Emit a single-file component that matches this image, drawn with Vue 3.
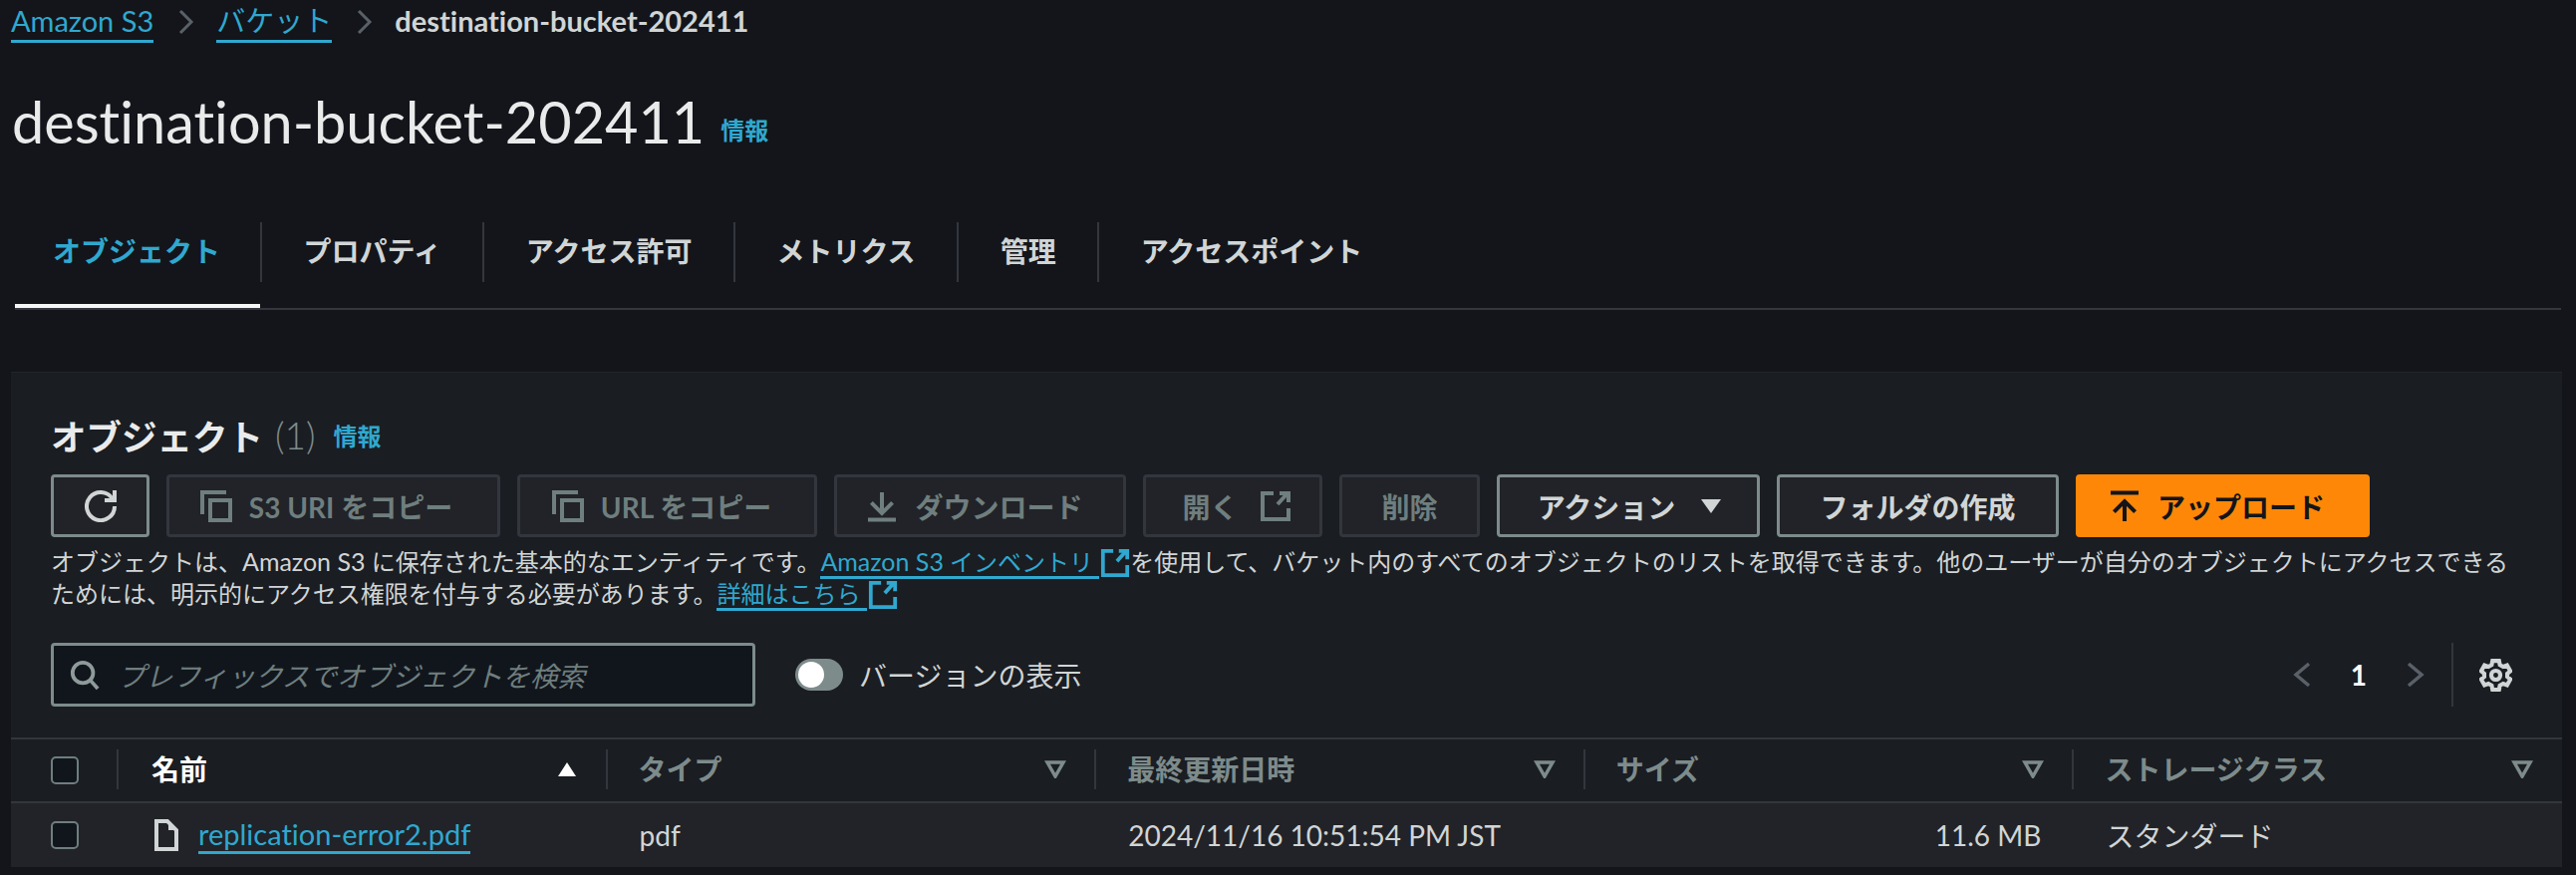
<template>
  <div class="page">
    <nav class="crumbs">
      <a class="link">Amazon S3</a>
      <svg class="crumb-sep" viewBox="0 0 16 26"><path d="M2 2l11 11L2 24" /></svg>
      <a class="link">バケット</a>
      <svg class="crumb-sep" viewBox="0 0 16 26"><path d="M2 2l11 11L2 24" /></svg>
      <span class="crumb-current">destination-bucket-202411</span>
    </nav>

    <div class="title-row">
      <h1>destination-bucket-202411</h1>
      <span class="info info-lg">情報</span>
    </div>

    <div class="tabs">
      <div v-for="(tab, i) in tabs" :key="tab" class="tab" :class="{ active: i === 0 }">{{ tab }}</div>
    </div>

    <section class="panel">
      <div class="panel-head">
        <h2>オブジェクト</h2>
        <span class="count">(1)</span>
        <span class="info">情報</span>
      </div>

      <div class="actions">
        <button class="btn b-refresh">
          <svg class="icon" viewBox="0 0 16 16"><path d="M10 5h5V0" /><path d="M15 8a7 7 0 1 1-1.05-3.66" /></svg>
        </button>
        <button class="btn off b-s3">
          <svg class="icon" viewBox="0 0 16 16"><path d="M1 12V1h12" /><rect x="5" y="5" width="10" height="10" /></svg>
          S3 URI をコピー
        </button>
        <button class="btn off b-url">
          <svg class="icon" viewBox="0 0 16 16"><path d="M1 12V1h12" /><rect x="5" y="5" width="10" height="10" /></svg>
          URL をコピー
        </button>
        <button class="btn off b-dl">
          <svg class="icon" viewBox="0 0 16 16"><path d="M8 1v10.5M2.7 6.2L8 11.5l5.3-5.3M1 14.75h14" /></svg>
          ダウンロード
        </button>
        <button class="btn off b-open">
          開く
          <svg class="icon" viewBox="0 0 16 16"><path d="M7 1.5H1.5v13h13V9" /><path d="M9 7l5-5.5M10 1.5h4.5V6" /></svg>
        </button>
        <button class="btn off b-del">削除</button>
        <button class="btn b-action">
          アクション
          <svg class="caret" viewBox="0 0 24 16"><path d="M2 1h20L12 15z" /></svg>
        </button>
        <button class="btn b-folder">フォルダの作成</button>
        <button class="btn primary b-upload">
          <svg class="icon" viewBox="0 0 16 16"><path d="M1 1.25h14M8 15.5V5M2.7 10.8L8 5.5l5.3 5.3" /></svg>
          アップロード
        </button>
      </div>

      <p class="desc">
        オブジェクトは、<span class="latin">Amazon S3</span> に保存された基本的なエンティティです。<a class="link"><span class="latin">Amazon S3</span> インベントリ </a><svg class="ext" viewBox="0 0 16 16"><path d="M7 1.5H1.5v13h13V9" /><path d="M9 7l5-5.5M10 1.5h4.5V6" /></svg>を使用して、バケット内のすべてのオブジェクトのリストを取得できます。他のユーザーが自分のオブジェクトにアクセスできる<br />ためには、明示的にアクセス権限を付与する必要があります。<a class="link">詳細はこちら </a><svg class="ext" viewBox="0 0 16 16"><path d="M7 1.5H1.5v13h13V9" /><path d="M9 7l5-5.5M10 1.5h4.5V6" /></svg>
      </p>

      <div class="filters">
        <div class="search">
          <svg class="search-icon" viewBox="0 0 16 16"><circle cx="7" cy="7" r="5.5" /><path d="M11 11l4 4.5" /></svg>
          <span>プレフィックスでオブジェクトを検索</span>
        </div>
        <div class="toggle"><span class="knob"></span></div>
        <span class="toggle-label">バージョンの表示</span>
        <div class="pager">
          <svg class="page-arrow" viewBox="0 0 18 26"><path d="M16 2L3 13l13 11" /></svg>
          <span class="page-num">1</span>
          <svg class="page-arrow" viewBox="0 0 18 26"><path d="M2 2l13 11L2 24" /></svg>
        </div>
        <div class="gear-box">
          <svg class="gear" viewBox="0 0 16 16">
            <path d="M6.4 1h3.2l.4 2 1.6.9 1.9-.7 1.6 2.8-1.5 1.3v1.4l1.5 1.3-1.6 2.8-1.9-.7-1.6.9-.4 2H6.4l-.4-2-1.6-.9-1.9.7-1.6-2.8 1.5-1.3V7.3L.9 6l1.6-2.8 1.9.7L6 3z" />
            <circle cx="8" cy="8" r="2.2" />
          </svg>
        </div>
      </div>

      <div class="table">
        <div class="thead">
          <div class="check-cell"><span class="check"></span></div>
          <div v-for="(col, i) in columns" :key="col" class="th" :class="{ sorted: i === 0 }">
            <span>{{ col }}</span>
            <svg v-if="i === 0" class="sort" viewBox="0 0 22 16"><path d="M11 1l9 14H2z" /></svg>
            <svg v-else class="filter" viewBox="0 0 22 18"><path d="M3 2h16l-8 14z" /></svg>
          </div>
        </div>
        <div class="tbody">
          <div class="check-cell"><span class="check"></span></div>
          <div class="td td-name">
            <svg class="file" viewBox="0 0 24 32"><path d="M2 2h11l9 9v19H2z" /><path class="file-ear" d="M14 3v8h8z" /></svg>
            <a class="link">replication-error2.pdf</a>
          </div>
          <div class="td">pdf</div>
          <div class="td">2024/11/16 10:51:54 PM JST</div>
          <div class="td td-size">11.6 MB</div>
          <div class="td">スタンダード</div>
        </div>
      </div>
    </section>
  </div>
</template>

<script setup>
const tabs = ['オブジェクト', 'プロパティ', 'アクセス許可', 'メトリクス', '管理', 'アクセスポイント']
const columns = ['名前', 'タイプ', '最終更新日時', 'サイズ', 'ストレージクラス']
</script>

<style>
html,
body {
  margin: 0;
  background: #13151b;
}
</style>

<style scoped>
.page {
  width: 2585px;
  height: 878px;
  overflow: hidden;
  background: #13151b;
  color: #d1d5d5;
  font-family: Lato, "Noto Sans CJK JP", sans-serif;
  font-size: 28px;
  font-variant-ligatures: none;
}

.link {
  color: #30a8cf;
  border-bottom: 3px solid #30a8cf;
}

.latin {
  font-size: 25px;
}

/* パンくず */
.crumbs {
  display: flex;
  align-items: flex-start;
  height: 44px;
  padding-left: 11px;
  font-size: 29px;
  line-height: 38px;
  box-sizing: border-box;
  padding-top: 2px;
}

.crumb-sep {
  width: 16px;
  height: 26px;
  margin: 7px 22px 0 25px;
  fill: none;
  stroke: #5a6068;
  stroke-width: 3;
}

.crumb-current {
  font-weight: 700;
}

.title-row {
  display: flex;
  align-items: center;
  height: 154px;
  padding-left: 12px;
}

h1 {
  margin: 0;
  font-size: 57.6px;
  font-weight: 400;
  color: #e9ebeb;
}

.info {
  color: #30a8cf;
  font-size: 24px;
  font-weight: 700;
  margin-left: 18px;
}

.info-lg {
  margin-top: 16px;
  margin-left: 16px;
}

.tabs {
  display: flex;
  height: 113px;
  margin: 0 15px 62px 15px;
  padding-top: 25px;
  box-sizing: border-box;
  border-bottom: 2px solid #33363d;
}

.tab {
  position: relative;
  height: 60px;
  padding: 0 41.5px;
  line-height: 58px;
  font-weight: 700;
  border-left: 2px solid #33363d;
}

.tab:first-child {
  border-left: none;
  padding: 0 40px 0 38px;
}

.tab.active {
  color: #30a8cf;
}

.tab.active::after {
  content: "";
  position: absolute;
  left: 0;
  right: 0;
  top: 82px;
  height: 4px;
  background: #f4f5f5;
}

/* パネル */
.panel {
  margin: 0 14px 0 11px;
  height: 494px;
  padding-top: 38px;
  box-sizing: border-box;
  background: #1a1d22;
  border-top: 1px solid #22252a;
}

.panel-head {
  display: flex;
  align-items: center;
  height: 48px;
  margin-bottom: 16px;
  padding-left: 40px;
}

h2 {
  margin: 0;
  font-size: 35.5px;
  font-weight: 700;
  color: #e9ebeb;
}

.count {
  margin-left: 12px;
  font-size: 37px;
  font-weight: 300;
  color: #7d8b8b;
}

.actions {
  display: flex;
  gap: 17px;
  padding-left: 40px;
}

.btn {
  display: flex;
  align-items: center;
  justify-content: center;
  gap: 17px;
  height: 63px;
  padding: 0;
  box-sizing: border-box;
  background: #212328;
  border: 3px solid #7d8b8b;
  border-radius: 4px;
  color: #d1d5d5;
  font: inherit;
  font-weight: 700;
}

.btn.off {
  border-color: #33363d;
  color: #6f7e7e;
}

.btn.primary {
  background: #ff8707;
  border-color: #ff8707;
  color: #13151b;
}

.b-refresh { width: 99px; }
.b-s3 { width: 335px; padding-right: 14px; }
.b-url { width: 301px; padding-right: 11px; }
.b-dl { width: 293px; padding-right: 11px; }
.b-open { width: 180px; padding-left: 8px; gap: 21px; }
.b-del { width: 141px; }
.b-action { width: 264px; padding-left: 4px; gap: 24px; }
.b-folder { width: 283px; }
.b-upload { width: 295px; padding-right: 12px; }

.icon {
  width: 32px;
  height: 32px;
  fill: none;
  stroke: currentColor;
  stroke-width: 2;
}

.caret {
  width: 24px;
  height: 16px;
  fill: currentColor;
}

.desc {
  margin: 8px 0 0;
  padding-left: 40px;
  font-size: 24px;
  line-height: 32px;
  white-space: nowrap;
}

.ext {
  width: 30px;
  height: 30px;
  margin-left: 1px;
  vertical-align: -7px;
  fill: none;
  stroke: #30a8cf;
  stroke-width: 2;
}

.filters {
  display: flex;
  align-items: center;
  height: 64px;
  margin-top: 33px;
  padding-left: 40px;
}

.search {
  display: flex;
  align-items: center;
  gap: 18px;
  width: 707px;
  height: 64px;
  padding-left: 16px;
  box-sizing: border-box;
  background: #11161d;
  border: 3px solid #7d8b8b;
  border-radius: 4px;
  color: #6f7e7e;
  font-size: 27.7px;
  font-style: italic;
}

.search-icon {
  width: 30px;
  height: 32px;
  fill: none;
  stroke: #8f9b9b;
  stroke-width: 2;
}

.toggle {
  width: 48px;
  height: 32px;
  margin-left: 40px;
  border-radius: 16px;
  background: #7d8b8b;
  position: relative;
}

.knob {
  position: absolute;
  left: 3px;
  top: 3px;
  width: 26px;
  height: 26px;
  border-radius: 50%;
  background: #fff;
}

.toggle-label {
  margin-left: 16px;
}

.pager {
  display: flex;
  align-items: center;
  margin-left: auto;
  margin-right: 27px;
  gap: 40px;
}

.page-arrow {
  width: 18px;
  height: 26px;
  fill: none;
  stroke: #5a6068;
  stroke-width: 3.5;
}

.page-num {
  font-weight: 700;
  color: #fff;
}

.gear-box {
  display: flex;
  align-items: center;
  height: 64px;
  padding: 0 50px 0 26px;
  border-left: 2px solid #33363d;
}

.gear {
  width: 33px;
  height: 33px;
  fill: none;
  stroke: #d1d5d5;
  stroke-width: 2;
}

/* テーブル */
.table {
  margin-top: 31px;
  border-top: 2px solid #33363d;
}

.thead,
.tbody {
  display: grid;
  grid-template-columns: 107px repeat(5, 1fr);
}

.thead {
  height: 64px;
  box-sizing: border-box;
  border-bottom: 2px solid #33363d;
}

.tbody {
  height: 64px;
  background: #212328;
}

.check-cell {
  display: flex;
  align-items: center;
  padding-left: 40px;
}

.check {
  width: 28px;
  height: 28px;
  box-sizing: border-box;
  background: #11161d;
  border: 2.5px solid #6f7e7e;
  border-radius: 5px;
}

.th {
  display: flex;
  align-items: center;
  justify-content: space-between;
  height: 40px;
  margin-top: 10px;
  padding: 0 29px 0 31px;
  margin-left: -1px;
  border-left: 2px solid #33363d;
  color: #7d8b8b;
  font-weight: 700;
}

.th span {
  margin-top: -3px;
}

.th.sorted {
  padding-left: 33px;
  color: #fff;
}

.sort {
  width: 22px;
  height: 16px;
  fill: #fff;
}

.filter {
  width: 22px;
  height: 18px;
  fill: none;
  stroke: #7d8b8b;
  stroke-width: 3.5;
}

.td {
  display: flex;
  align-items: center;
  padding-left: 33px;
}

.td-name {
  gap: 20px;
  padding-left: 37px;
}

.td-name .link {
  font-size: 29px;
}

.file {
  width: 24px;
  height: 32px;
  fill: none;
  stroke: #d1d5d5;
  stroke-width: 4;
}

.file-ear {
  fill: #d1d5d5;
  stroke: none;
}

.td-size {
  justify-content: flex-end;
  padding: 0 32px 0 0;
}
</style>
